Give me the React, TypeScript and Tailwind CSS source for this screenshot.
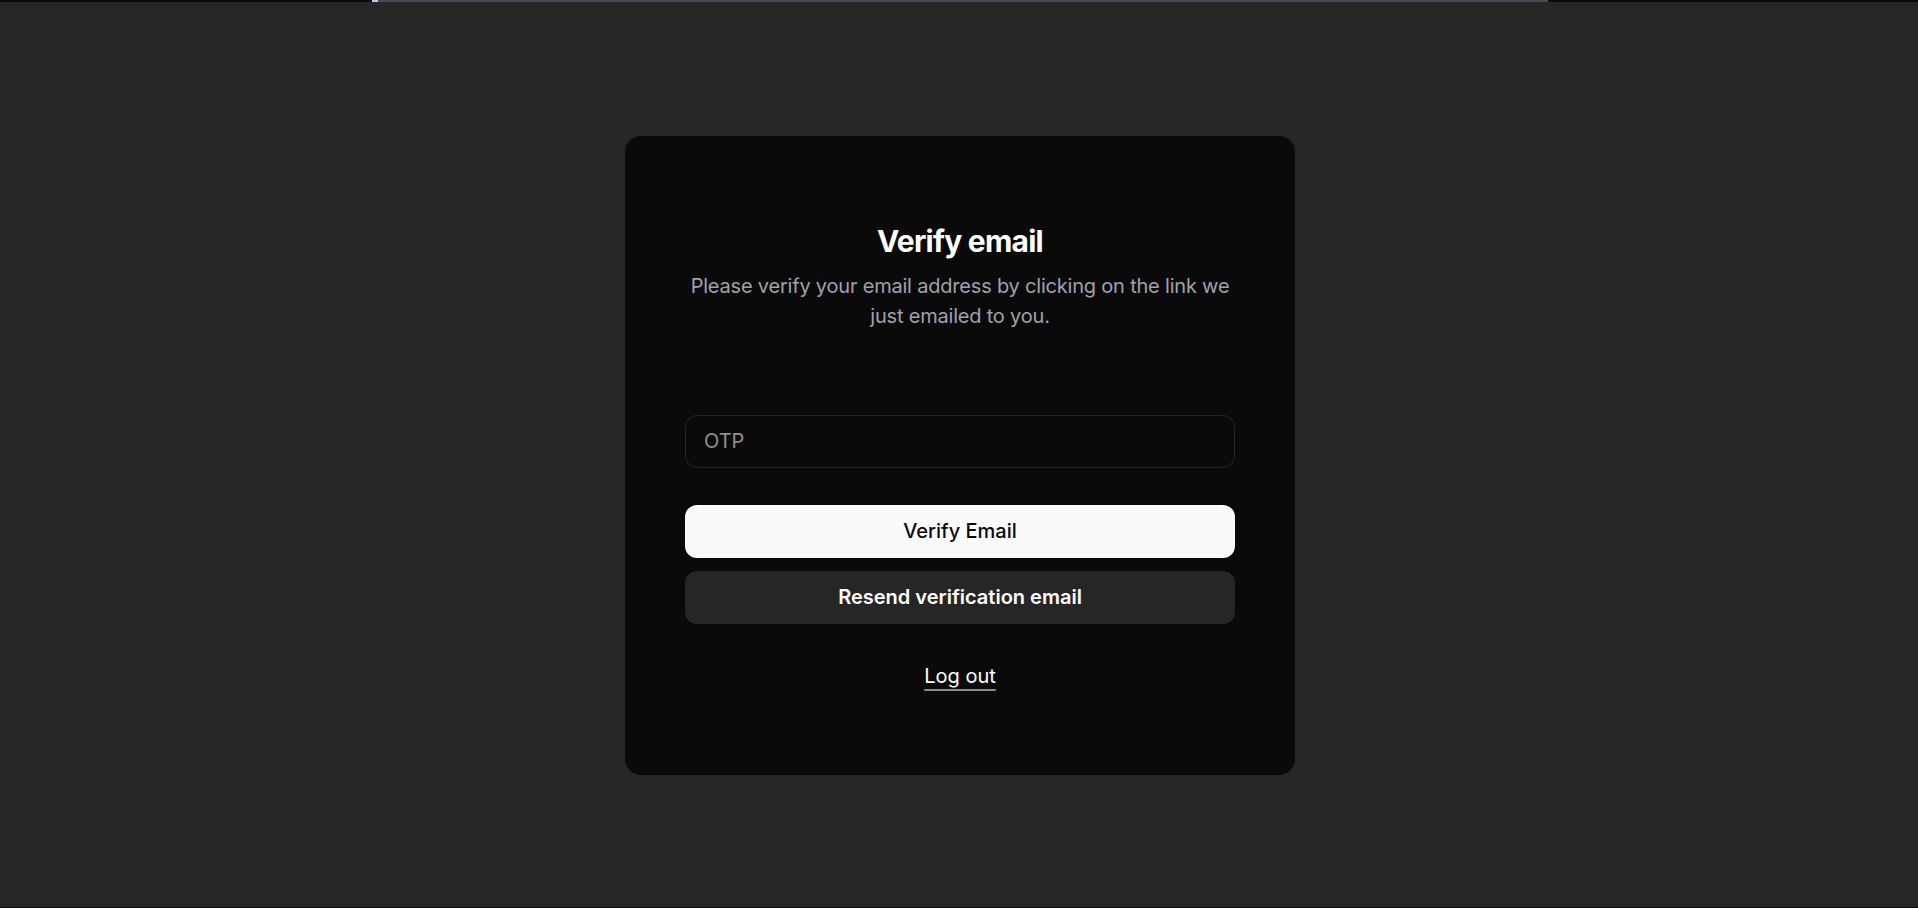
import { useState } from "react";

const VerifyEmail = () => {
  const [otp, setOtp] = useState("");

  return (
    <div className="mt-[1px] ml-[2px] w-[670px] rounded-2xl bg-[#0a0a0a] px-[60px] pt-[87px] pb-[85px]">
      <div className="text-center">
        <h1 className="text-[30px] leading-9 font-bold tracking-tight text-white">
          Verify email
        </h1>
        <p className="mt-[12px] text-xl leading-[30px] tracking-[-0.01em] text-[#a1a1aa]">
          Please verify your email address by clicking on the link we just
          emailed to you.
        </p>
      </div>
      <form
        className="mt-[84px] flex flex-col"
        onSubmit={(e) => e.preventDefault()}
      >
        <input
          className="h-[53px] w-full rounded-xl border border-[#262626] bg-transparent px-[18px] text-xl text-white placeholder:text-[#8f8f8f] outline-none"
          type="text"
          name="otp"
          placeholder="OTP"
          value={otp}
          onChange={(e) => setOtp(e.target.value)}
        />
        <button
          type="submit"
          className="mt-[37px] h-[53px] w-full rounded-xl bg-[#fafafa] text-xl font-medium text-[#0a0a0a]"
        >
          Verify Email
        </button>
        <button
          type="button"
          className="mt-[13px] h-[53px] w-full rounded-xl bg-[#262626] text-xl font-semibold text-white"
        >
          Resend verification email
        </button>
      </form>
      <div className="mt-[38px] text-center">
        <button
          type="button"
          className="text-xl leading-7 text-white underline decoration-[#8a8a8a] decoration-[1.5px] underline-offset-[6px]"
        >
          Log out
        </button>
      </div>
    </div>
  );
};

export default function App() {
  return (
    <div
      className="flex h-screen flex-col bg-[#262626]"
      style={{ fontFamily: "Inter, 'Noto Sans', sans-serif" }}
    >
      {/* top loading bar */}
      <div className="flex h-[2px] shrink-0 bg-[#0b0b0b]">
        <div className="w-[372px]" />
        <div className="w-[6px] bg-[#c7c3f0]" />
        <div className="w-[1170px] bg-[#4a4a55]" />
      </div>
      <div className="flex flex-1 items-center justify-center">
        <VerifyEmail />
      </div>
      <div className="h-px shrink-0 bg-[#0b0b0b]" />
    </div>
  );
}
